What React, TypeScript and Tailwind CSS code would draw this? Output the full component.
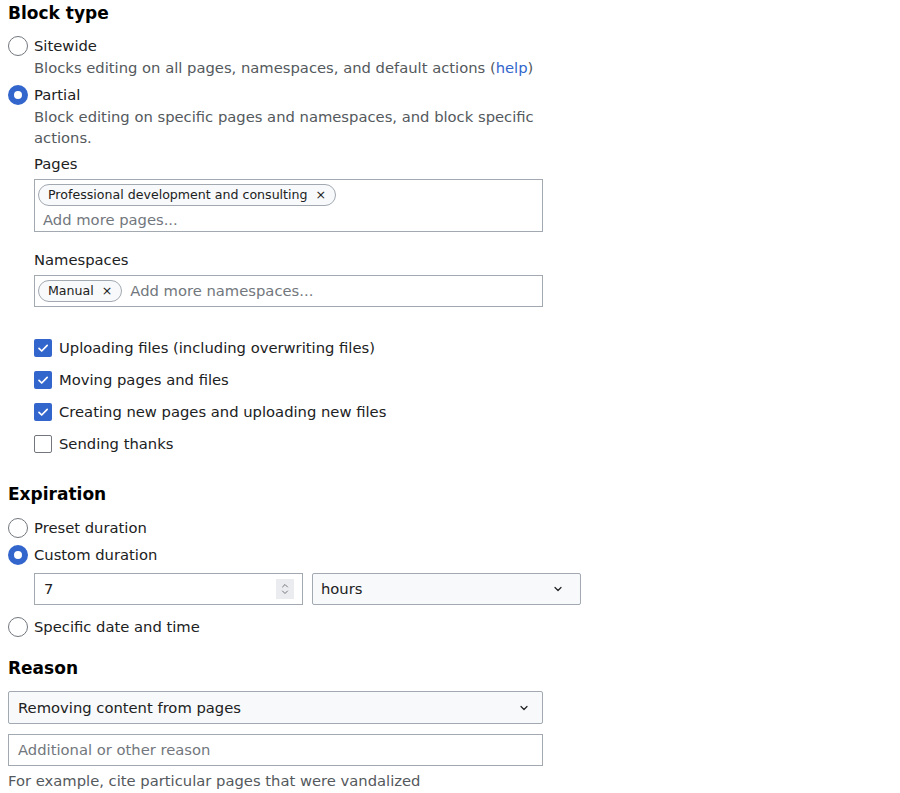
import React from 'react';

const Radio = ({ checked, label }: { checked?: boolean; label: string }) => (
  <div className="flex h-[22px] items-center gap-[6px]">
    <span
      className={
        checked
          ? 'box-border h-[20px] w-[20px] shrink-0 rounded-full border-[6px] border-[#36c] bg-white'
          : 'box-border h-[20px] w-[20px] shrink-0 rounded-full border border-[#72777d] bg-white'
      }
    />
    <span>{label}</span>
  </div>
);

const Checkbox = ({ checked, label }: { checked?: boolean; label: string }) => (
  <div className="flex h-[32px] items-center gap-[7px]">
    <span
      className={
        checked
          ? 'flex h-[18px] w-[18px] items-center justify-center rounded-[2px] bg-[#36c]'
          : 'box-border h-[18px] w-[18px] rounded-[2px] border border-[#72777d] bg-white'
      }
    >
      {checked && (
        <svg width="14" height="14" viewBox="0 0 14 14" fill="none">
          <path d="M3 7.3l2.7 2.7L11.2 4.3" stroke="white" strokeWidth="1.7" strokeLinecap="round" strokeLinejoin="round" />
        </svg>
      )}
    </span>
    <span>{label}</span>
  </div>
);

const Chip = ({ label }: { label: string }) => (
  <span className="flex h-[22px] items-center gap-[8px] rounded-full border border-[#a2a9b1] bg-[#f8f9fa] pl-[9px] pr-[9px] text-[12.6px]">
    <span>{label}</span>
    <span>×</span>
  </span>
);

const Chevron = () => (
  <svg width="12" height="12" viewBox="0 0 12 12" fill="none">
    <path d="M3 4.5l3 3 3-3" stroke="#202122" strokeWidth="1.2" strokeLinecap="round" strokeLinejoin="round" />
  </svg>
);

const Heading = ({ children }: { children: React.ReactNode }) => (
  <h2 className="flex h-[26px] items-center text-[17px] font-bold text-black">{children}</h2>
);

export default function App() {
  return (
    <div className="min-h-screen bg-white px-2 font-['DejaVu_Sans',sans-serif] text-[14.75px] leading-[22px] text-[#202122]">
      <Heading>Block type</Heading>

      <div className="mt-[9px]">
        <Radio label="Sitewide" />
        <p className="pl-[26px] text-[#54595d]">
          Blocks editing on all pages, namespaces, and default actions (
          <span className="text-[#36c]">help</span>)
        </p>
      </div>

      <div className="mt-[5px]">
        <Radio checked label="Partial" />
        <p className="w-[530px] pl-[26px] leading-[21px] text-[#54595d]">
          Block editing on specific pages and namespaces, and block specific actions.
        </p>
      </div>

      <div className="pl-[26px]">
        <div className="mt-[5px]">Pages</div>
        <div className="mt-[4px] box-border h-[53px] w-[509px] border border-[#a2a9b1] pl-[3px] pt-[4px]">
          <div className="flex">
            <Chip label="Professional development and consulting" />
          </div>
          <div className="mt-[3px] pl-[5px] text-[#72777d]">Add more pages...</div>
        </div>

        <div className="mt-[17px]">Namespaces</div>
        <div className="mt-[4px] box-border flex h-[32px] w-[509px] items-center gap-[8px] border border-[#a2a9b1] pl-[3px]">
          <Chip label="Manual" />
          <span className="text-[#72777d]">Add more namespaces...</span>
        </div>

        <div className="mt-[25px]">
          <Checkbox checked label="Uploading files (including overwriting files)" />
          <Checkbox checked label="Moving pages and files" />
          <Checkbox checked label="Creating new pages and uploading new files" />
          <Checkbox label="Sending thanks" />
        </div>
      </div>

      <div className="mt-[21px]">
        <Heading>Expiration</Heading>
      </div>
      <div className="mt-[10px]">
        <Radio label="Preset duration" />
      </div>
      <div className="mt-[5px]">
        <Radio checked label="Custom duration" />
      </div>
      <div className="mt-[7px] flex gap-[9px] pl-[26px]">
        <div className="box-border flex h-[32px] w-[269px] items-center justify-between border border-[#a2a9b1] pl-[9px] pr-[8px]">
          <span>7</span>
          <span className="flex h-[20px] w-[18px] items-center justify-center bg-[#eaecf0]">
            <svg width="10" height="16" viewBox="0 0 10 16" fill="none">
              <path d="M2.5 6l2.5-2.5L7.5 6M2.5 10l2.5 2.5L7.5 10" stroke="#72777d" strokeWidth="1" strokeLinecap="round" strokeLinejoin="round" />
            </svg>
          </span>
        </div>
        <div className="box-border flex h-[32px] w-[269px] items-center justify-between rounded-[2px] border border-[#a2a9b1] bg-[#f8f9fa] pl-[8px] pr-[16px]">
          <span>hours</span>
          <Chevron />
        </div>
      </div>
      <div className="mt-[11px]">
        <Radio label="Specific date and time" />
      </div>

      <div className="mt-[17px]">
        <Heading>Reason</Heading>
      </div>
      <div className="mt-[10px] box-border flex h-[33px] w-[535px] items-center justify-between rounded-[2px] border border-[#a2a9b1] bg-[#f8f9fa] pl-[9px] pr-[12px]">
        <span>Removing content from pages</span>
        <Chevron />
      </div>
      <div className="mt-[10px] box-border flex h-[32px] w-[535px] items-center border border-[#a2a9b1] pl-[9px] text-[#72777d]">
        Additional or other reason
      </div>
      <p className="mt-[4px] text-[#54595d]">For example, cite particular pages that were vandalized</p>
    </div>
  );
}
